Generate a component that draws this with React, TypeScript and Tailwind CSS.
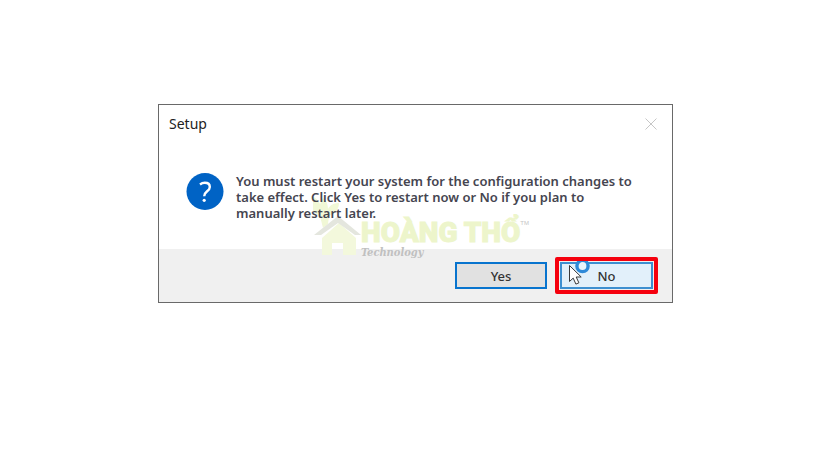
import React, { useState } from 'react';

const Watermark: React.FC = () => (
  <div className="absolute left-[154px] top-[88px] flex pointer-events-none select-none" aria-hidden="true">
    <svg className="h-18 w-12 shrink-0" viewBox="0 0 48 72" fill="none">
      <path d="M-6 2c5 0 10 3 13 9l3-6c3 2 5 6 5 11 2-4 6-6 11-6 0 6-4 11-10 13l-1 8-5 4-3-12C0 20-6 12-6 2z" fill="#f1f8d6" />
      <path d="M9 45l17-15 17 15v17H30V50H19v12H9z" fill="#f3f8dc" />
      <path d="M1 42l24-19 23 19h-6L25 30 8 42z" fill="#e4e6de" />
    </svg>
    <div className="relative pt-6 whitespace-nowrap">
      <div className="text-[28px] leading-8 font-black text-[#edf5cb] font-['Roboto',sans-serif] [-webkit-text-stroke:1px_#edf5cb]">
        HOÀNG THỔ
      </div>
      <span className="absolute left-full top-6 text-[6px] leading-3 text-[#c5c5c5] font-['Liberation_Sans',sans-serif]">TM</span>
      <div className="-mt-1 text-[11px] leading-4 font-bold italic text-[#c0c0c0] font-['DejaVu_Serif_Condensed','DejaVu_Serif',serif]">Technology</div>
    </div>
  </div>
);

const BusyCursor: React.FC = () => (
  <svg className="absolute left-2 top-0 h-6 w-7 pointer-events-none" viewBox="0 0 28 24" fill="none" aria-hidden="true">
    <circle cx="15.500" cy="5" r="5.600" fill="#e8f4fc" stroke="#2f8ad8" strokeWidth="3.400" />
    <path d="M2.500 4.500v16l3.700-3.400 2.700 6 3-1.300-2.700-5.800h5z" fill="#fff" stroke="#3a3a3a" strokeWidth="1" strokeLinejoin="round" />
  </svg>
);

const App: React.FC = () => {
  const [open, setOpen] = useState(true);

  return (
    <main className="min-h-screen bg-white flex items-start justify-center pt-26 pl-[11px] font-['Noto_Sans','Open_Sans',sans-serif]">
      {open && (
        <div
          role="dialog"
          aria-labelledby="dialog-title"
          aria-describedby="dialog-message"
          className="relative w-full max-w-[515px] border border-[#696969] bg-white"
        >
          <header className="flex h-[38px] items-center justify-between pl-[10px] pr-[15px]">
            <h1 id="dialog-title" className="text-[14px] leading-5 text-[#222]">Setup</h1>
            <button type="button" aria-label="Close" onClick={() => setOpen(false)}>
              <svg className="h-3 w-3" viewBox="0 0 12 12" stroke="#c6c6c6" strokeWidth="1">
                <path d="M.5.5l11 11M11.500.5l-11 11" />
              </svg>
            </button>
          </header>

          <div className="flex h-[106px] items-start gap-3 pt-[30px] pl-[27px] pr-4">
            <svg className="h-[38px] w-[38px] shrink-0" viewBox="0 0 38 38" fill="none">
              <circle cx="19" cy="18.500" r="18.500" fill="#0063c5" />
              <path d="M14 11.500c1.500-1.200 3-1.700 4.800-1.700 3 0 5 1.600 5 4.100 0 4.500-5.600 4.300-5.600 9.300" stroke="#fff" strokeWidth="2.400" />
              <circle cx="18.200" cy="27.300" r="1.600" fill="#fff" />
            </svg>
            <p id="dialog-message" className="relative z-10 text-[13px] leading-4 font-semibold text-[#454550]">
              You must restart your system for the configuration changes to
              <br />
              take effect. Click Yes to restart now or No if you plan to
              <br />
              manually restart later.
            </p>
          </div>

          <footer className="flex h-[53px] items-center justify-end gap-2 bg-[#f0f0f0] pr-[14px]">
            <button
              type="button"
              onClick={() => setOpen(false)}
              className="h-[27px] w-23 border-2 border-[#0874ce] bg-[#e1e1e1] text-[13px] leading-4 font-medium text-[#333]"
            >
              Yes
            </button>
            <div className="relative rounded-xs border-4 border-[#f5000d] bg-[#f0f0f0] p-px">
              <button
                type="button"
                onClick={() => setOpen(false)}
                className="block h-[27px] w-[93px] border-2 border-[#3d8fd0] bg-[#e2f0fa] text-[13px] leading-4 font-medium text-[#333]"
              >
                No
              </button>
              <BusyCursor />
            </div>
          </footer>
          <Watermark />
        </div>
      )}
    </main>
  );
};

export default App;
